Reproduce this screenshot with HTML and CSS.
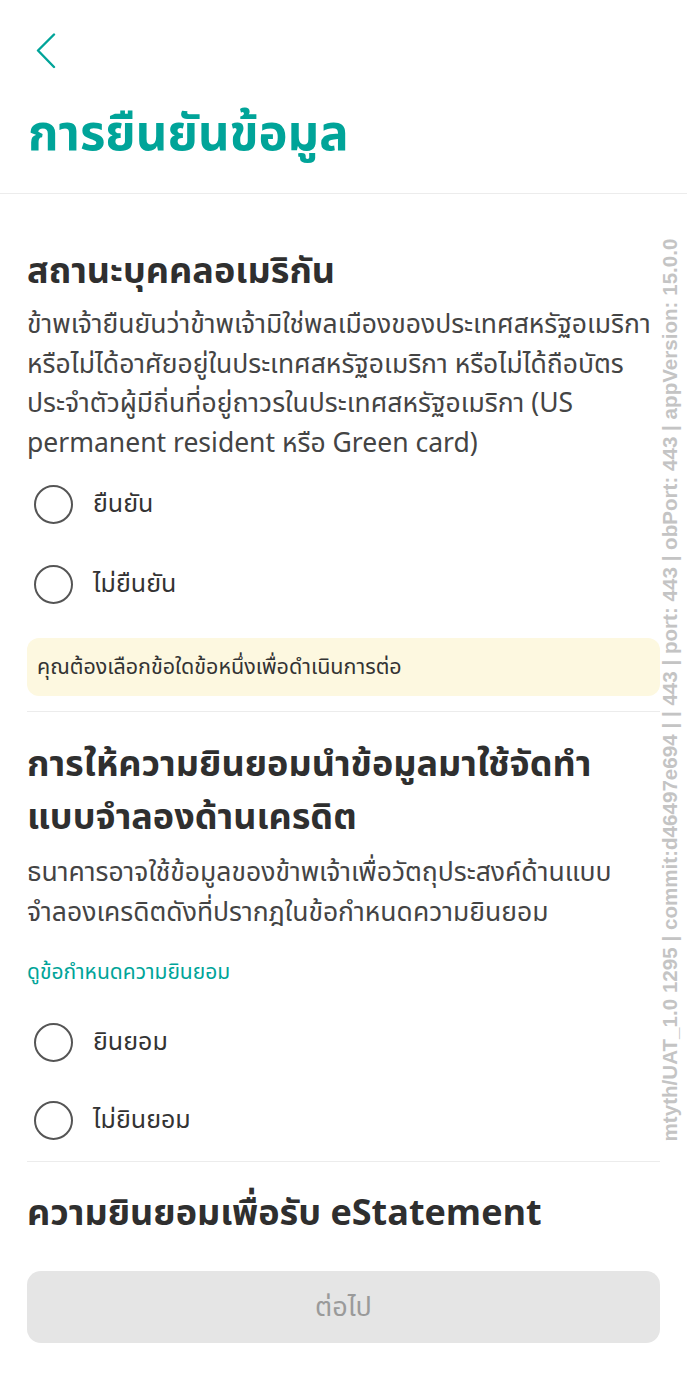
FILE: index.html
```html
<!DOCTYPE html>
<html lang="th">
<head>
<meta charset="utf-8">
<title>การยืนยันข้อมูล</title>
<link rel="stylesheet" href="styles.css">
</head>
<body>
<div class="page">
  <header class="header">
    <button class="back" aria-label="back">
      <svg width="22" height="36" viewBox="0 0 22 36"><path d="M19 1.5 L3 17.5 L19 34" fill="none" stroke="#00a499" stroke-width="2.4" stroke-linecap="round" stroke-linejoin="round"/></svg>
    </button>
    <h1 class="title">การยืนยันข้อมูล</h1>
  </header>

  <main class="content">
    <section class="section first">
      <h2 class="heading">สถานะบุคคลอเมริกัน</h2>
      <p class="desc">ข้าพเจ้ายืนยันว่าข้าพเจ้ามิใช่พลเมืองของประเทศสหรัฐอเมริกา<br>หรือไม่ได้อาศัยอยู่ในประเทศสหรัฐอเมริกา หรือไม่ได้ถือบัตร<br>ประจำตัวผู้มีถิ่นที่อยู่ถาวรในประเทศสหรัฐอเมริกา (US<br>permanent resident หรือ Green card)</p>
      <div class="options">
        <label class="option"><span class="radio"></span><span class="opt-label">ยืนยัน</span></label>
        <label class="option"><span class="radio"></span><span class="opt-label">ไม่ยืนยัน</span></label>
      </div>
      <div class="warning">คุณต้องเลือกข้อใดข้อหนึ่งเพื่อดำเนินการต่อ</div>
    </section>

    <section class="section">
      <h2 class="heading">การให้ความยินยอมนำข้อมูลมาใช้จัดทำ<br>แบบจำลองด้านเครดิต</h2>
      <p class="desc">ธนาคารอาจใช้ข้อมูลของข้าพเจ้าเพื่อวัตถุประสงค์ด้านแบบ<br>จำลองเครดิตดังที่ปรากฎในข้อกำหนดความยินยอม</p>
      <a class="link" href="#">ดูข้อกำหนดความยินยอม</a>
      <div class="options second">
        <label class="option"><span class="radio"></span><span class="opt-label">ยินยอม</span></label>
        <label class="option"><span class="radio"></span><span class="opt-label">ไม่ยินยอม</span></label>
      </div>
    </section>

    <section class="section last">
      <h2 class="heading">ความยินยอมเพื่อรับ eStatement</h2>
    </section>

    <button class="next" disabled>ต่อไป</button>
  </main>

  <div class="buildinfo">mtyth/UAT_1.0 1295 | commit:d46497e694 | | 443 | port: 443 | obPort: 443 | appVersion: 15.0.0</div>
</div>
</body>
</html>
```
FILE: styles.css
```css
html, body {
  margin: 0;
  padding: 0;
  background: #fff;
}
.page {
  position: relative;
  width: 687px;
  min-height: 1396px;
  overflow: hidden;
  font-family: "Noto Sans Thai", "Noto Sans", "DejaVu Sans", sans-serif;
  color: #3a3a3a;
}
.header {
  height: 194px;
  border-bottom: 1px solid #ececec;
  padding: 33px 28px 0;
  box-sizing: border-box;
}
.back {
  display: block;
  margin: 0 0 0 7px;
  padding: 0;
  border: 0;
  background: none;
  width: 22px;
  height: 36px;
}
.back svg {
  display: block;
}
.title {
  margin: 0;
  padding-top: 36px;
  font-size: 49px;
  line-height: 60px;
  font-weight: 700;
  color: #00a499;
  white-space: nowrap;
}
.content {
  padding: 0 27px;
}
.section {
  border-bottom: 1px solid #ececec;
}
.section.first {
  padding-top: 52px;
  padding-bottom: 15px;
}
.section:not(.first) {
  padding-top: 27px;
}
.section.last {
  border-bottom: 0;
  padding-top: 26px;
}
.heading {
  margin: 0;
  font-size: 36px;
  line-height: 53px;
  font-weight: 700;
  color: #2f2f2f;
  white-space: nowrap;
}
.desc {
  margin: 7px 0 0;
  font-size: 26.5px;
  line-height: 39.5px;
  color: #444;
  white-space: nowrap;
}
.section:not(.first) .desc {
  margin-top: 9px;
}
.options {
  display: flex;
  flex-direction: column;
}
.options.second {
  margin-top: 15px;
  padding-bottom: 2px;
}
.option {
  display: flex;
  align-items: center;
  gap: 20px;
  height: 80px;
  padding-left: 7px;
}
.options.second .option {
  height: 78px;
}
.radio {
  width: 39px;
  height: 39px;
  border: 2px solid #555;
  border-radius: 50%;
  box-sizing: border-box;
  flex: none;
}
.opt-label {
  font-size: 25px;
  color: #333;
}
.warning {
  margin-top: 14px;
  background: #fdf8e0;
  border-radius: 12px;
  height: 58px;
  display: flex;
  align-items: center;
  padding: 0 10px;
  font-size: 21.5px;
  color: #333;
  white-space: nowrap;
}
.link {
  display: block;
  margin-top: 25px;
  font-size: 21px;
  line-height: 30px;
  color: #00a499;
  text-decoration: none;
}
.next {
  display: block;
  width: 100%;
  height: 72px;
  margin-top: 30px;
  border: 0;
  border-radius: 14px;
  background: #e5e5e5;
  color: #9a9a9a;
  font-family: inherit;
  font-size: 27px;
}
.buildinfo {
  position: absolute;
  left: 670px;
  top: 690px;
  transform: translate(-50%, -50%) rotate(-90deg);
  white-space: nowrap;
  font-family: "Liberation Sans", Arial, sans-serif;
  font-weight: 700;
  font-size: 20.6px;
  color: #c4c4c4;
}
```
